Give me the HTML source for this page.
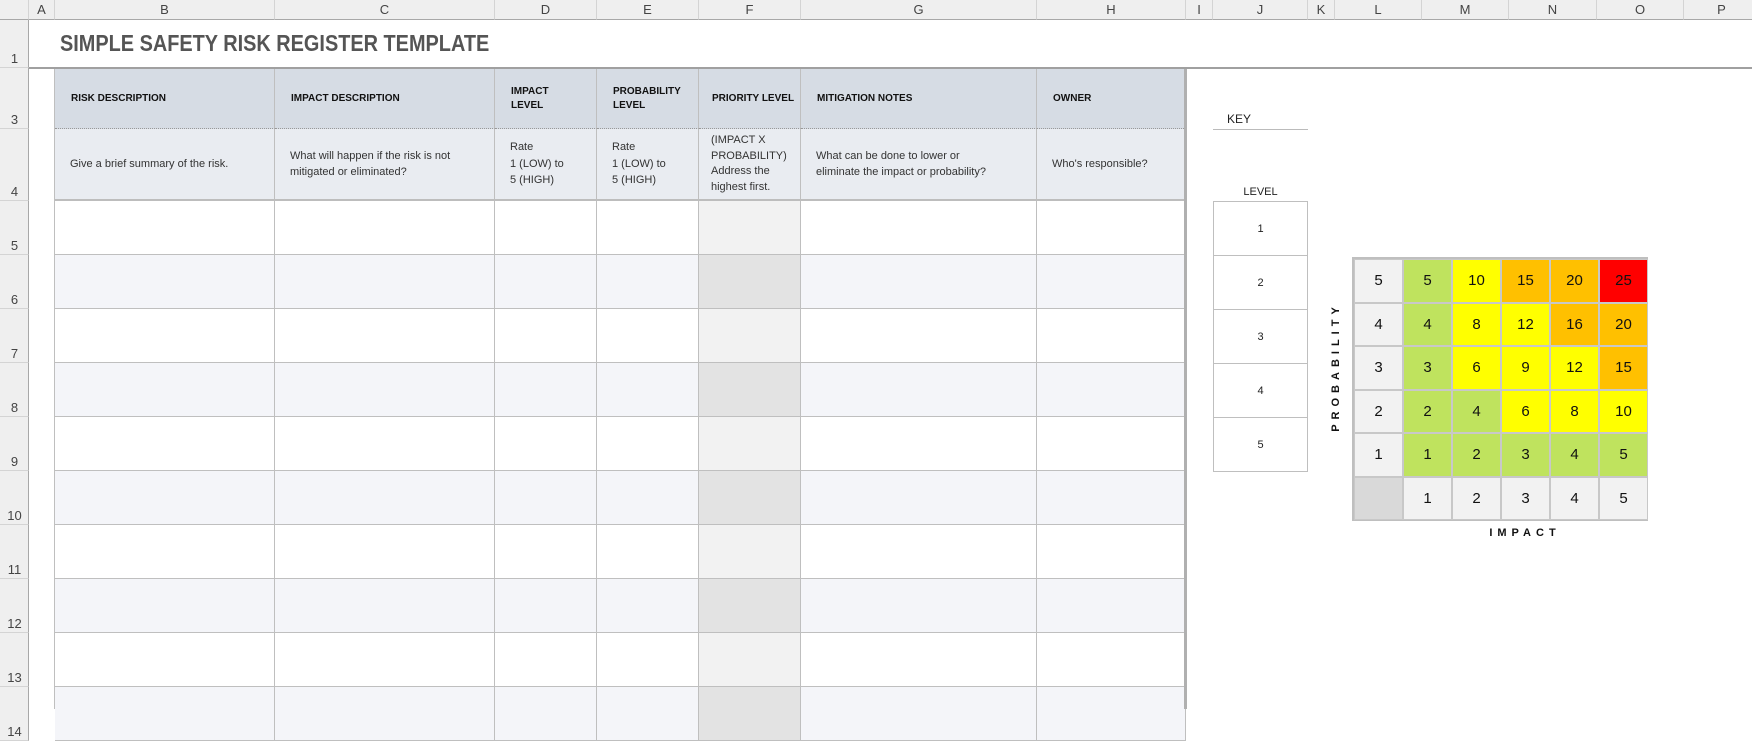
<!DOCTYPE html>
<html><head><meta charset="utf-8">
<style>
*{margin:0;padding:0;box-sizing:border-box}
body{width:1752px;height:702px;overflow:hidden;background:#fff;font-family:"Liberation Sans",Arial,sans-serif;position:relative}
.a{position:absolute}
.ch{position:absolute;top:0;height:20px;background:#efefef;border-right:1px solid #d4d4d4;border-bottom:1px solid #a8a8a8;color:#444;font-size:13px;text-align:center;line-height:20px}
.rh{position:absolute;left:0;width:29px;background:#efefef;border-bottom:1px solid #d4d4d4;border-right:1px solid #a8a8a8;color:#444;font-size:13px;text-align:center}
.rh span{position:absolute;bottom:1px;left:0;width:29px}
.cell{position:absolute;border-right:1px solid #bfbfbf;border-bottom:1px solid #bfbfbf}
.hd{font-size:10px;font-weight:bold;color:#111;padding-left:16px;display:flex;align-items:center;line-height:14px}
.ds{font-size:11px;color:#333;padding-left:15px;display:flex;align-items:center;line-height:16.5px}
.m{position:absolute;width:49px;height:43.5px;border:1px solid #c8c8c8;font-size:15px;color:#111;display:flex;align-items:center;justify-content:center}
</style></head><body>
<div id="root"></div>
<div class="a" style="left:60px;top:30px;font-size:23px;font-weight:bold;color:#555;transform:scaleX(0.865);transform-origin:left top;white-space:nowrap">SIMPLE SAFETY RISK REGISTER TEMPLATE</div>
<div class="a" style="left:1213px;top:112px;width:95px;height:18px;border-bottom:1px solid #bbb;font-size:12px;color:#222;padding-left:14px">KEY</div>
<div class="a" style="left:1213px;top:186px;width:95px;text-align:center;font-size:11px;color:#222">LEVEL</div>
<div class="a" style="left:1275px;top:527px;width:500px;text-align:center;font-size:11px;font-weight:bold;letter-spacing:5px;color:#111">IMPACT</div>
<div class="a" style="left:1336px;top:367px;transform:translate(-50%,-50%) rotate(-90deg);font-size:11px;font-weight:bold;letter-spacing:5px;color:#111;white-space:nowrap">PROBABILITY</div>
<script>
const R=document.getElementById('root');
function add(h){R.insertAdjacentHTML('beforeend',h);}
const cols=[['',0,29],['A',29,55],['B',55,275],['C',275,495],['D',495,597],['E',597,699],['F',699,801],['G',801,1037],['H',1037,1186],['I',1186,1213],['J',1213,1308],['K',1308,1335],['L',1335,1422],['M',1422,1509],['N',1509,1597],['O',1597,1684],['P',1684,1760]];
cols.forEach(c=>add(`<div class="ch" style="left:${c[1]}px;width:${c[2]-c[1]}px">${c[0]}</div>`));
const rows=[['1',20,68],['3',68,129],['4',129,201]];
for(let i=0;i<10;i++)rows.push([String(5+i),201+54*i,255+54*i]);
rows.forEach(r=>add(`<div class="rh" style="top:${r[1]}px;height:${r[2]-r[1]}px"><span>${r[0]}</span></div>`));
add(`<div class="a" style="left:29px;top:67px;width:1723px;height:2px;background:#a0a0a0"></div>`);
const tc=[55,275,495,597,699,801,1037,1186];
const heads=['RISK DESCRIPTION','IMPACT DESCRIPTION','IMPACT<br>LEVEL','PROBABILITY<br>LEVEL','PRIORITY LEVEL','MITIGATION NOTES','OWNER'];
const descs=['Give a brief summary of the risk.','What will happen if the risk is not<br>mitigated or eliminated?','Rate<br>1 (LOW) to<br>5 (HIGH)','Rate<br>1 (LOW) to<br>5 (HIGH)','(IMPACT X<br>PROBABILITY)<br>Address the<br>highest first.','What can be done to lower or<br>eliminate the impact or probability?','Who\'s responsible?'];
for(let j=0;j<7;j++){
 const x=tc[j],w=tc[j+1]-x;
 add(`<div class="cell hd" style="left:${x}px;top:69px;width:${w}px;height:60px;background:#d6dce4;border-bottom:1px dotted #999;${j==4?'padding-left:13px':''}">${heads[j]}</div>`);
 add(`<div class="cell ds" style="left:${x}px;top:129px;width:${w}px;height:72px;background:#e9ecf1;border-bottom:2px solid #bdbdbd;${j==4?'padding-left:12px;line-height:15.5px':''}">${descs[j]}</div>`);
 for(let i=0;i<10;i++){
  const alt=i%2==1;
  let bg=alt?'#f4f5f9':'#fff';
  if(j==4)bg=alt?'#e3e3e3':'#f2f2f2';
  add(`<div class="cell" style="left:${x}px;top:${201+54*i}px;width:${w}px;height:54px;background:${bg}"></div>`);
 }
}
add(`<div class="a" style="left:54px;top:69px;width:1px;height:640px;background:#bfbfbf"></div>`);
add(`<div class="a" style="left:1184px;top:69px;width:3px;height:640px;background:#b0b0b0"></div>`);
for(let i=0;i<5;i++)add(`<div class="a" style="left:1213px;top:${201+54*i}px;width:95px;height:55px;border:1px solid #bfbfbf;font-size:11px;color:#222;display:flex;align-items:center;justify-content:center">${i+1}</div>`);
const G='#bfe35e',Y='#ffff00',O='#ffc000',Rd='#ff0000',L='#f2f2f2';
const grid=[[5,[5,G],[10,Y],[15,O],[20,O],[25,Rd]],[4,[4,G],[8,Y],[12,Y],[16,O],[20,O]],[3,[3,G],[6,Y],[9,Y],[12,Y],[15,O]],[2,[2,G],[4,G],[6,Y],[8,Y],[10,Y]],[1,[1,G],[2,G],[3,G],[4,G],[5,G]]];
add(`<div class="a" style="left:1352px;top:257px;width:296px;height:264px;border:2px solid #bfbfbf"></div>`);
grid.forEach((r,i)=>{
 const y=259+43.5*i;
 add(`<div class="m" style="left:1354px;top:${y}px;background:${L}">${r[0]}</div>`);
 for(let k=1;k<6;k++)add(`<div class="m" style="left:${1354+49*k}px;top:${y}px;background:${r[k][1]}">${r[k][0]}</div>`);
});
const yb=259+43.5*5;
add(`<div class="m" style="left:1354px;top:${yb}px;background:#d9d9d9"></div>`);
for(let k=1;k<6;k++)add(`<div class="m" style="left:${1354+49*k}px;top:${yb}px;background:${L}">${k}</div>`);
</script>
</body></html>
